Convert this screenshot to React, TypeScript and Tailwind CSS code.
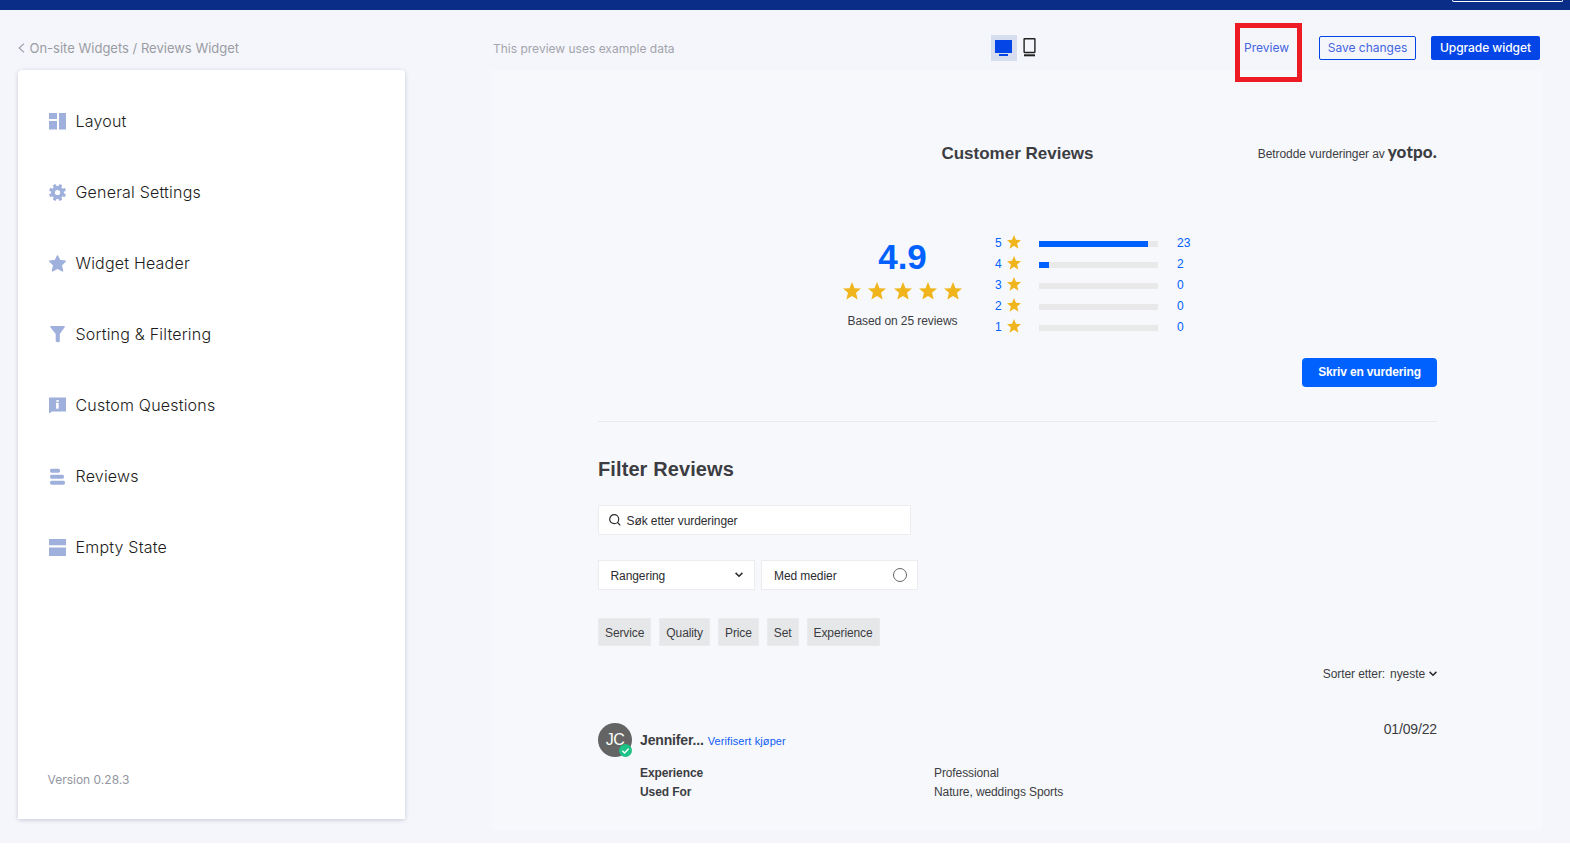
import React from "react";

const ARIAL = "font-['Liberation_Sans',Arial,sans-serif]";

const icons: Record<string, React.ReactNode> = {
  layout: <path d="M0 0h8v6H0zM0 8h8v8.500H0zM10 0h7v16.500h-7z" />,
  settings: (
    <>
      {[22.5, 67.5, 112.5, 157.5].map((a) => (
        <rect key={a} x="6.900" y="0" width="3.200" height="17" rx="0.500" transform={`rotate(${a} 8.5 8.5)`} />
      ))}
      <circle cx="8.500" cy="8.500" r="6.400" />
      <circle cx="8.500" cy="8.500" r="2.600" fill="#fff" />
    </>
  ),
  star: (
    <path
      d="M8.500 1 10.700 5.600l5.500.6-4 3.900 1.300 5.700-5-2.800-5 2.800 1.300-5.700-4-3.900 5.500-.6z"
      stroke="#9fb0dc"
      strokeWidth="1.500"
      strokeLinejoin="round"
    />
  ),
  filter: <path d="M1.500 0h14l.3.900L10.800 8v7.300l-.8.900H8L6.700 15V8L1.200.9z" />,
  question: (
    <path fillRule="evenodd" d="M0 .500h17v14H3L0 16.500zM7.400 3h2.300v1.700H7.400zM6.900 5.800h2.800v5.900H7.100V7.400z" />
  ),
  reviews: (
    <>
      <rect x="1" y="0.700" width="10" height="4" rx="1.600" />
      <rect x="1" y="6.700" width="14" height="4" rx="1.600" />
      <rect x="1" y="12.700" width="15" height="4" rx="1.600" />
    </>
  ),
  empty: <path d="M0 0h17v6.200H0zM0 8.500h17V17H0z" />,
};

const nav = [
  { icon: "layout", label: "Layout" },
  { icon: "settings", label: "General Settings" },
  { icon: "star", label: "Widget Header" },
  { icon: "filter", label: "Sorting & Filtering" },
  { icon: "question", label: "Custom Questions" },
  { icon: "reviews", label: "Reviews" },
  { icon: "empty", label: "Empty State" },
];

const ratings = [
  { stars: 5, count: 23 },
  { stars: 4, count: 2 },
  { stars: 3, count: 0 },
  { stars: 2, count: 0 },
  { stars: 1, count: 0 },
];

const tags = ["Service", "Quality", "Price", "Set", "Experience"];

function Star({ className }: { className: string }) {
  return (
    <svg viewBox="0 0 18 18" className={className} fill="#f0b51c">
      <path d="M9 0l2.500 6.200 6.500.400-5 4.200 1.700 6.800L9 13.900l-5.700 3.700L5 10.800 0 6.600l6.500-.4z" />
    </svg>
  );
}

function Chevron() {
  return (
    <svg viewBox="0 0 8 6" className="h-1.5 w-2 shrink-0" fill="none" stroke="#2c2c30" strokeWidth="1.500">
      <path d="M.6.900 4 4.300 7.400.900" />
    </svg>
  );
}

function Sidebar() {
  return (
    <aside className="flex h-[749px] w-[387px] flex-col rounded-t bg-white pt-4 shadow-[0_1px_4px_rgba(40,50,80,0.22)]">
      {nav.map((n) => (
        <div key={n.label} className="flex h-[71px] shrink-0 items-center gap-[9.500px] pl-[31px]">
          <svg viewBox="0 0 17 17" className="size-[17px]" fill="#9fb0dc">
            {icons[n.icon]}
          </svg>
          <span className="pb-0.5 text-base leading-5 font-light tracking-[0.2px] text-[#1c1c20]">{n.label}</span>
        </div>
      ))}
      <div className="mt-auto pb-[31px] pl-[29.500px] text-xs leading-4 text-[#92969f]">Version 0.28.3</div>
    </aside>
  );
}

function Toolbar() {
  return (
    <div className="flex h-[60px] items-start text-xs">
      <div className="w-[499px] pt-[31px] pl-px leading-4 text-[#a2a4ab]">This preview uses example data</div>
      <div className="mt-[25px] flex size-[26px] items-center justify-center bg-[#d5ddee]">
        <svg viewBox="0 0 18 18" className="size-[18px]" fill="#0345e6">
          <path d="M0 1h17v13H0zM4 15h9v2H4z" />
        </svg>
      </div>
      <svg viewBox="0 0 13 19" className="mt-7 ml-1.5 h-[19px] w-[13px]" fill="none" stroke="#222">
        <rect x="1.100" y="0.700" width="10.800" height="13.800" rx="0.400" strokeWidth="1.400" />
        <path d="M1 17.300h11" strokeWidth="2" />
      </svg>
      <div className="mt-[13px] ml-[199px] h-[59px] w-[67px] border-5 border-[#ed1c24] pt-3 pl-1 leading-4 text-[#4565e0]">
        Preview
      </div>
      <button className="mt-[26px] ml-[17px] h-6 w-[97px] rounded-xs border border-[#0345e6] leading-4 text-[#4565e0]">
        Save changes
      </button>
      <button className="mt-[26px] ml-[15px] h-6 w-[109px] rounded-xs bg-[#0345e6] leading-4 font-medium tracking-[-0.050px] text-white">
        Upgrade widget
      </button>
    </div>
  );
}

function Summary() {
  return (
    <section>
      <div className="grid h-5 grid-cols-[1fr_auto_1fr] items-center">
        <span />
        <h1 className="text-[17px] leading-5 font-bold">Customer Reviews</h1>
        <div className="flex items-center justify-end gap-[3px] text-xs leading-5">
          <span className="tracking-[-0.080px]">Betrodde vurderinger av</span>
          <span className="-mt-1 font-['Lato',sans-serif] text-[17px] leading-5 font-black tracking-[0.150px]">yotpo.</span>
        </div>
      </div>
      <div className="mt-[68.500px] flex pl-[245px]">
        <div className="flex w-[119px] flex-col items-center">
          <div className="mt-1 text-[35px] leading-10 font-bold text-[#0061ff]">4.9</div>
          <div className="mt-[5px] flex w-full justify-between">
            {[0, 1, 2, 3, 4].map((i) => (
              <Star key={i} className="size-[18px]" />
            ))}
          </div>
          <div className="mt-[13px] text-xs leading-4 tracking-[-0.080px] whitespace-nowrap">Based on 25 reviews</div>
        </div>
        <div className="ml-[33px] text-xs text-[#0061ff]">
          {ratings.map((r) => (
            <div key={r.stars} className="flex h-[21px] items-center">
              <span className="w-3">{r.stars}</span>
              <Star className="-mt-0.5 size-3.5" />
              <div className="mt-0.5 ml-[18px] h-1.5 w-[119px] bg-[#e9e9e9]">
                <div className="h-full bg-[#0061ff]" style={{ width: `${(r.count / 25) * 100}%` }} />
              </div>
              <span className="ml-[19px]">{r.count}</span>
            </div>
          ))}
        </div>
      </div>
      <div className="mt-[20.500px] flex justify-end">
        <button className="h-[29px] w-[135px] rounded bg-[#0061ff] pb-0.5 text-xs font-bold tracking-[-0.150px] text-white">
          Skriv en vurdering
        </button>
      </div>
      <hr className="mt-[34px] border-[#e7e9ed]" />
    </section>
  );
}

function Filters() {
  return (
    <section className="text-xs">
      <h2 className="mt-[35px] text-xl leading-6 font-bold tracking-[0.1px]">Filter Reviews</h2>
      <div className="mt-6 flex h-[30px] w-[312.500px] items-center border border-[#ececee] bg-white pl-2.5 text-[#2c2c30]">
        <svg viewBox="0 0 12 12" className="size-3" fill="none" stroke="#2c2c30" strokeWidth="1.200">
          <circle cx="5.200" cy="5.200" r="4.500" />
          <path d="m8.500 8.500 2.800 2.800" />
        </svg>
        <span className="ml-[5.500px] pt-0.5 tracking-[-0.080px]">Søk etter vurderinger</span>
      </div>
      <div className="mt-[25px] flex gap-1.5 text-[#2c2c30]">
        <div className="flex h-[30px] w-[157px] items-center justify-between border border-[#ececee] bg-white pr-[11px] pl-[11.500px]">
          <span className="pt-0.5 tracking-[-0.080px]">Rangering</span>
          <Chevron />
        </div>
        <div className="flex h-[30px] w-[157px] items-center justify-between border border-[#ececee] bg-white pr-2.5 pl-3">
          <span className="pt-0.5 tracking-[-0.080px]">Med medier</span>
          <span className="size-3.5 rounded-full border border-[#666]" />
        </div>
      </div>
      <div className="mt-7 flex gap-2">
        {tags.map((t) => (
          <span key={t} className="flex h-7 items-center border border-[#ebebed] bg-[#e6e7e9] px-1.5 pt-px tracking-[-0.100px]">
            {t}
          </span>
        ))}
      </div>
      <div className="mt-5 flex items-center justify-end leading-4 tracking-[-0.080px]">
        <span>Sorter etter:</span>
        <span className="mr-1 ml-[5px]">nyeste</span>
        <Chevron />
      </div>
    </section>
  );
}

function Review() {
  return (
    <article className="mt-10 flex text-xs">
      <div className="relative mt-px flex size-[34px] shrink-0 items-center justify-center rounded-full bg-[#646464] text-base text-white">
        <span className="tracking-[-0.5px]">JC</span>
        <svg viewBox="0 0 13 13" className="absolute right-0 bottom-0 size-[13px]">
          <circle cx="6.500" cy="6.500" r="6.500" fill="#1cc286" />
          <path d="m3.300 6.700 2.300 2.200 4-4.200" fill="none" stroke="#fff" strokeWidth="1.400" />
        </svg>
      </div>
      <div className="ml-2 flex-1 pt-[9px]">
        <div className="flex items-baseline gap-1 leading-[18px]">
          <b className="text-sm leading-[18px] tracking-[-0.150px]">Jennifer...</b>
          <span className="text-[11px] tracking-[0.1px] text-[#0f5cf5]">Verifisert kjøper</span>
        </div>
        <div className="mt-3.5 grid grid-cols-[294px_auto] justify-start leading-[19px] tracking-[-0.100px]">
          <b>Experience</b>
          <span>Professional</span>
          <b>Used For</b>
          <span>Nature, weddings Sports</span>
        </div>
      </div>
      <time className="-mt-0.5 text-sm leading-[18px] tracking-[-0.150px]">01/09/22</time>
    </article>
  );
}

export default function App() {
  return (
    <div className="h-[854px] w-[1570px] overflow-hidden bg-white font-['Inter',sans-serif]">
      <div className="flex h-[843px] flex-col bg-[#f5f6fb]">
        <header className="flex h-2.5 shrink-0 justify-end bg-[#0a2e87] pr-[7px]">
          <div className="h-0.5 w-[111px] rounded-b-xs border border-t-0 border-white" />
        </header>
        <div className="flex">
          <div className="ml-[18px]">
            <div className="flex h-[60px] items-start pt-[30px] text-[13px] leading-4 text-[#9a9ca3]">
              <svg viewBox="0 0 7 10" className="mt-[3px] mr-[4.500px] h-2.5 w-[7px]" fill="none" stroke="#9a9ca3" strokeWidth="1.100">
                <path d="M6 .6 1.200 5 6 9.400" />
              </svg>
              On-site Widgets / Reviews Widget
            </div>
            <Sidebar />
          </div>
          <main className="ml-[87px] w-[1050px]">
            <Toolbar />
            <div className={`h-[760px] bg-[#f7f8fc] pt-[74px] pr-[105px] pl-[106px] text-[#3c3d42] ${ARIAL}`}>
              <Summary />
              <Filters />
              <Review />
            </div>
          </main>
        </div>
      </div>
    </div>
  );
}
